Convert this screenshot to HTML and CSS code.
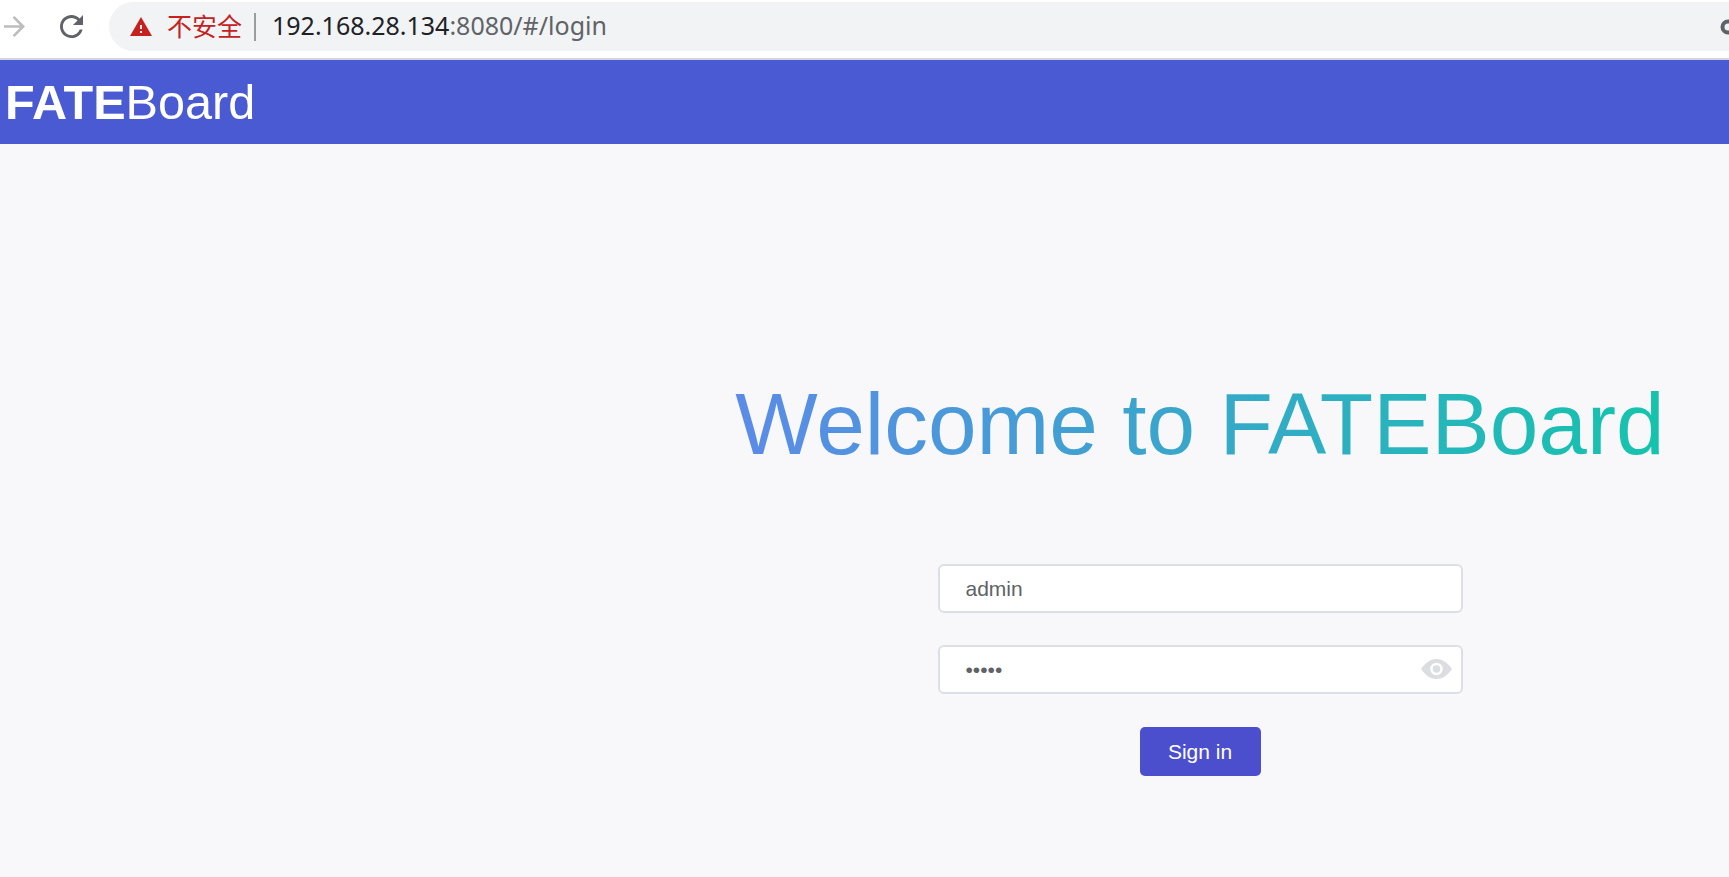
FILE: index.html
```html
<!DOCTYPE html>
<html lang="zh">
<head>
    <meta charset="UTF-8">
    <meta name="viewport" content="width=device-width, initial-scale=1.0">
    <title>FATEBoard</title>
    <link rel="stylesheet" href="styles.css">
</head>
<body>
    <div class="chrome-bar">
        <svg class="nav-forward" viewBox="4 4 16 16"><path d="M12 4l-1.41 1.41L16.17 11H4v2h12.17l-5.58 5.59L12 20l8-8z"/></svg>
        <svg class="nav-reload" viewBox="4 4 16 16"><path d="M17.65 6.35C16.2 4.9 14.21 4 12 4c-4.42 0-7.99 3.58-7.99 8s3.57 8 7.99 8c3.73 0 6.84-2.55 7.73-6h-2.08c-.82 2.33-3.04 4-5.65 4-3.31 0-6-2.69-6-6s2.69-6 6-6c1.66 0 3.14.69 4.22 1.78L13 11h7V4l-2.35 2.35z"/></svg>
        <div class="omnibox">
            <svg class="warn-icon" viewBox="1 2 22 19"><path d="M1 21h22L12 2 1 21zm12-3h-2v-2h2v2zm0-4h-2v-4h2v4z"/></svg>
            <span class="not-secure">不安全</span>
            <span class="omni-sep"></span>
            <span class="url"><span class="url-host">192.168.28.134</span>:8080/#/login</span>
            <svg class="key-icon" viewBox="0 0 9 16"><circle cx="8" cy="8" r="5.5"/></svg>
        </div>
    </div>

    <header class="app-header">
        <span class="logo"><b>FATE</b>Board</span>
    </header>

    <main class="login-page">
        <div class="login-box">
            <h1 class="welcome">Welcome to FATEBoard</h1>
            <form class="login-form">
                <div class="field">
                    <input class="field-input" type="text" value="admin">
                </div>
                <div class="field">
                    <input class="field-input" type="password" value="admin">
                    <svg class="eye-icon" viewBox="0 0 31 20">
                        <path class="eye-shape" d="M0 10C5 3 10 0 15.5 0S26 3 31 10C26 17 21 20 15.5 20S5 17 0 10z"/>
                        <circle class="eye-ring" cx="15.5" cy="10" r="5"/>
                    </svg>
                </div>
                <button class="signin-btn" type="button">Sign in</button>
            </form>
        </div>
    </main>
</body>
</html>
```

FILE: styles.css
```css
html, body {
    height: 100%;
}
body {
    margin: 0;
    overflow: hidden;
    background-color: #f8f8fb;
    font-family: "Liberation Sans", Arial, sans-serif;
    display: flex;
    flex-direction: column;
}

/* barra del navegador */
.chrome-bar {
    height: 58px;
    flex: none;
    display: flex;
    align-items: flex-start;
    background-color: #fff;
    border-bottom: 2px solid #d5d6dc;
}
.nav-forward {
    width: 23px;
    height: 21px;
    margin: 16px 0 0 3px;
    fill: #bdbdbd;
}
.nav-reload {
    width: 25px;
    height: 23px;
    margin: 15px 0 0 33px;
    fill: #5f6368;
}
.omnibox {
    flex: 1;
    height: 49px;
    margin: 2px 0 0 25px;
    padding-left: 21px;
    display: flex;
    align-items: center;
    background-color: #f1f3f4;
    border-radius: 25px 0 0 25px;
}
.warn-icon {
    width: 22px;
    height: 19px;
    fill: #c5221f;
}
.not-secure {
    margin: 0 0 4px 15px;
    color: #c5221f;
    font-family: "Noto Sans CJK SC", sans-serif;
    font-size: 25px;
}
.omni-sep {
    width: 2px;
    height: 28px;
    margin-left: 12px;
    background-color: #9a9c9f;
}
.url {
    margin: 0 0 4px 16px;
    color: #5f6368;
    font-family: "Noto Sans", sans-serif;
    font-size: 25px;
}
.url-host {
    color: #202124;
}
.key-icon {
    width: 9px;
    height: 16px;
    margin-left: auto;
    fill: none;
    stroke: #5f6368;
    stroke-width: 4;
}

/* cabecera */
.app-header {
    height: 84px;
    flex: none;
    display: flex;
    align-items: center;
    padding-left: 5px;
    background-color: #4a5ad3;
    color: #fff;
}
.logo {
    font-size: 48.6px;
}

/* login */
.login-page {
    flex: 1;
    display: grid;
    grid-template-columns: 671px 1fr;
}
.login-box {
    grid-column: 2;
    padding-top: 230px;
    display: flex;
    flex-direction: column;
    align-items: center;
}
.welcome {
    margin: 0;
    font-size: 87.4px;
    font-weight: normal;
    line-height: 100px;
    background-image: linear-gradient(90deg, #5b8be8, #14c4ac);
    -webkit-background-clip: text;
    background-clip: text;
    color: transparent;
}
.login-form {
    width: 525px;
    margin-top: 90px;
    display: flex;
    flex-direction: column;
    align-items: center;
}
.field {
    position: relative;
    width: 100%;
    margin-bottom: 32px;
}
.field-input {
    display: block;
    width: 100%;
    height: 49px;
    box-sizing: border-box;
    padding: 0 26px;
    background-color: #fff;
    border: 2px solid #dcdfe6;
    border-radius: 6px;
    color: #606266;
    font-family: "Liberation Sans", Arial, sans-serif;
    font-size: 21px;
    outline: none;
}
.eye-icon {
    position: absolute;
    top: 14px;
    right: 11px;
    width: 31px;
    height: 20px;
}
.eye-shape {
    fill: #dcdde0;
}
.eye-ring {
    fill: #dcdde0;
    stroke: #fff;
    stroke-width: 2.5;
}
.signin-btn {
    width: 121px;
    height: 49px;
    margin-top: 1px;
    padding: 0;
    background-color: #4b4fce;
    border: none;
    border-radius: 5px;
    color: #fff;
    font-family: "Liberation Sans", Arial, sans-serif;
    font-size: 21px;
    cursor: pointer;
}
```
